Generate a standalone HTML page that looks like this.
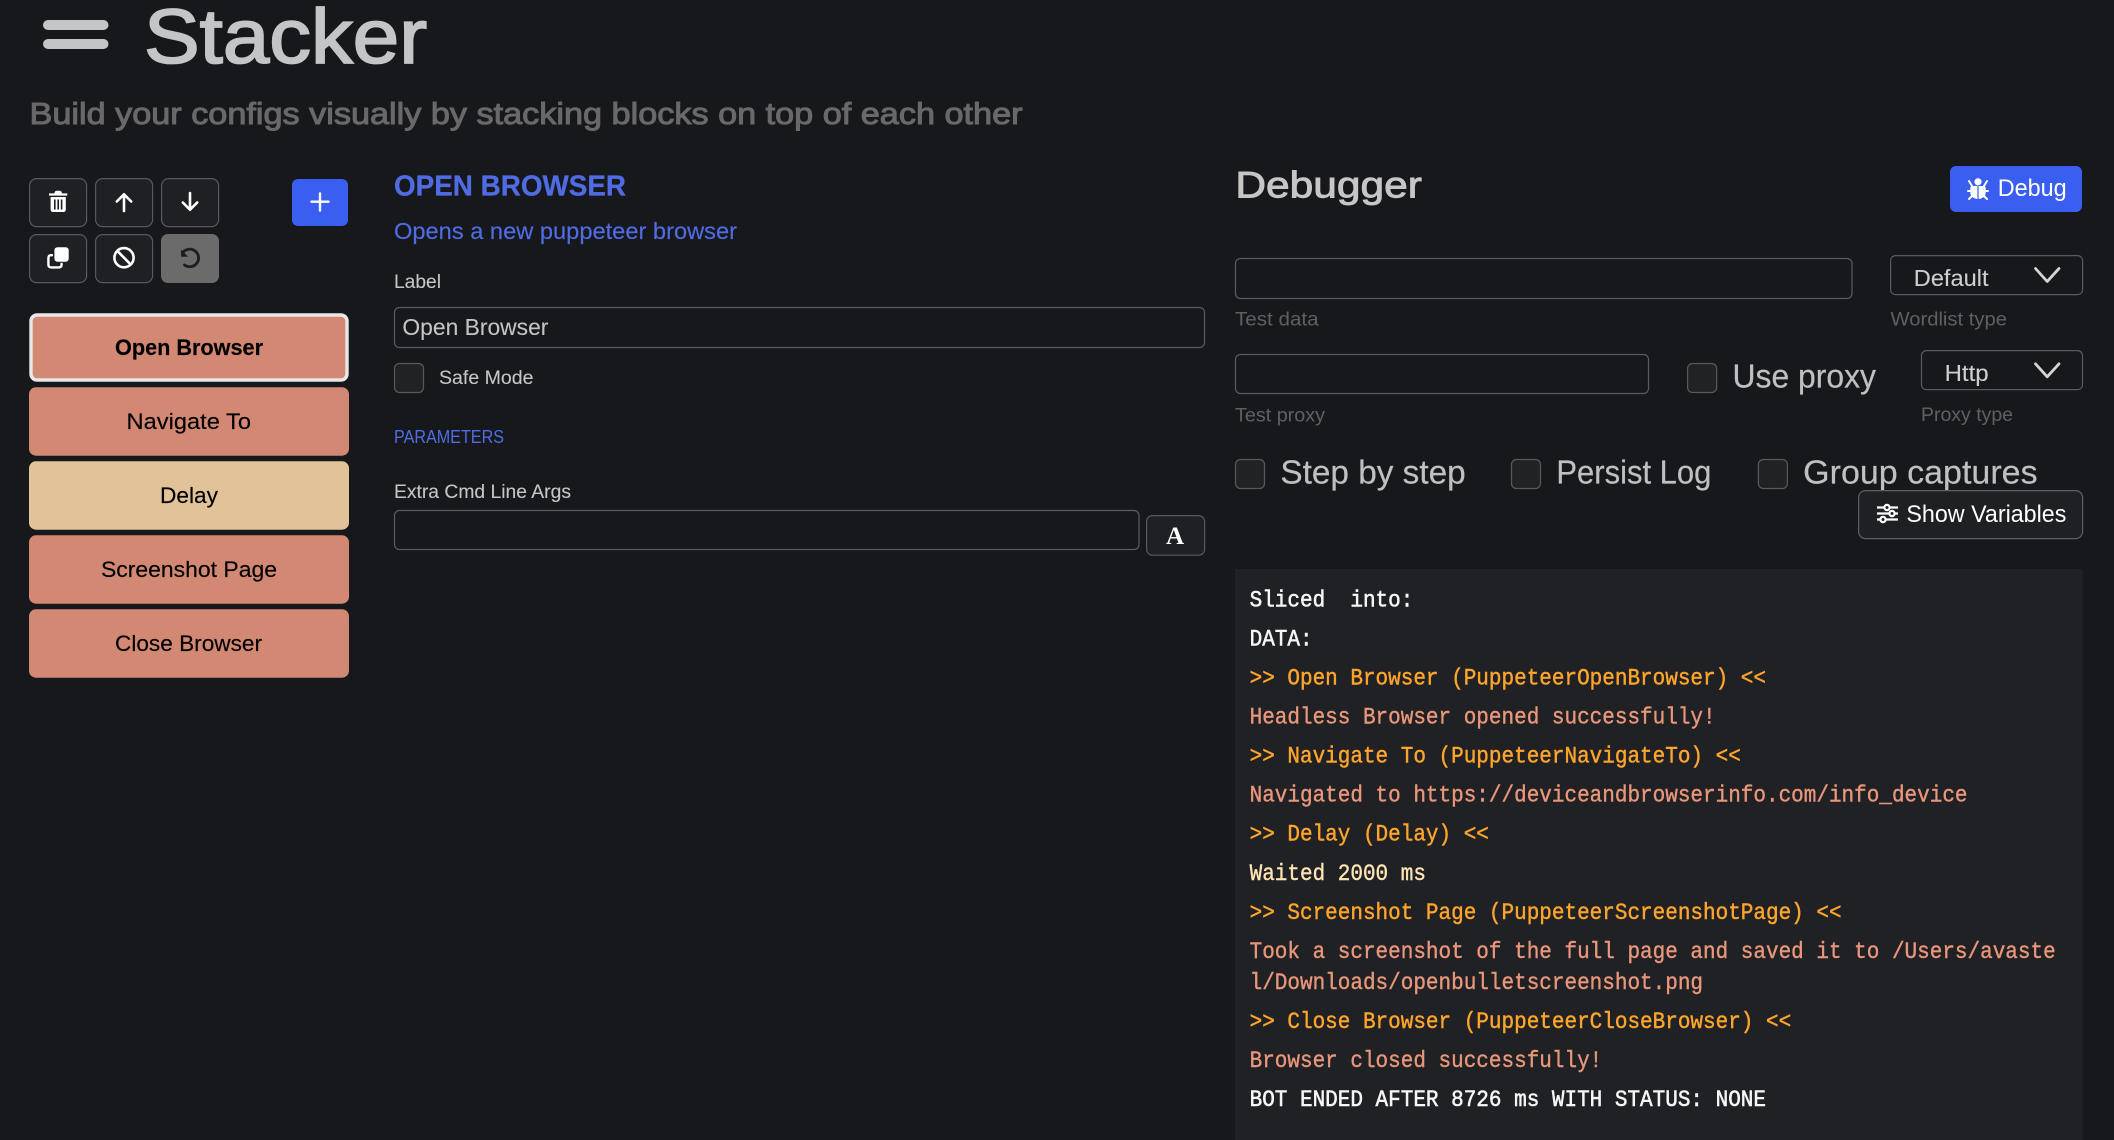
<!DOCTYPE html>
<html lang="en"><head><meta charset="utf-8"><title>Stacker</title>
<style>
html,body{margin:0;padding:0;background:#17181b;width:2114px;height:1140px;overflow:hidden}
svg{display:block}
text{font-family:"Liberation Sans",sans-serif;white-space:pre}
.m{font-family:"Liberation Mono",monospace;font-size:21px;white-space:pre}
.w{fill:#f6f6f6;stroke:#f6f6f6;stroke-width:.5}
.o{fill:#ffa52b;stroke:#ffa52b;stroke-width:.4}
.r{fill:#e9967a;stroke:#e9967a;stroke-width:.35}
.y{fill:#ffe4b5;stroke:#ffe4b5;stroke-width:.35}
.b{fill:#000;stroke:#000;stroke-width:.15}
.g{fill:#5f6062}
.l{fill:#c6c6c7;stroke:#c6c6c7;stroke-width:.1}
.big{fill:#bfc0c2;stroke:#bfc0c2;stroke-width:.2;font-size:33px}
</style></head><body>
<svg xmlns="http://www.w3.org/2000/svg" width="2114" height="1140" viewBox="0 0 2114 1140">
<rect width="2114" height="1140" fill="#17181b"/>
<!-- Header -->
<rect x="43" y="20" width="65.5" height="10" rx="5" fill="#c4c5c7"/>
<rect x="43" y="39" width="65.5" height="10" rx="5" fill="#c4c5c7"/>
<text x="144" y="63" font-size="77" fill="#c4c5c7" stroke="#c4c5c7" stroke-width="1.8" textLength="283" lengthAdjust="spacingAndGlyphs">Stacker</text>
<text x="29.5" y="124" font-size="31" fill="#69696a" stroke="#69696a" stroke-width="1" textLength="993" lengthAdjust="spacingAndGlyphs">Build your configs visually by stacking blocks on top of each other</text>
<!-- Toolbar -->
<g fill="#1f2023" stroke="#58595b" stroke-width="1.2">
<rect x="29.6" y="178.6" width="57" height="48" rx="7"/>
<rect x="95.6" y="178.6" width="57" height="48" rx="7"/>
<rect x="161.6" y="178.6" width="57" height="48" rx="7"/>
<rect x="29.6" y="234.6" width="57" height="48" rx="7"/>
<rect x="95.6" y="234.6" width="57" height="48" rx="7"/>
</g>
<rect x="161" y="234" width="58" height="49" rx="7" fill="#6b6b6b"/>
<rect x="292" y="179" width="56" height="47" rx="6" fill="#3a5ef0"/>
<!-- trash -->
<path d="M49 193.4h18.3v2.2H49z M54.5 193.4c0-1.8 1-2.7 2.2-2.7h3c1.2 0 2.2.9 2.2 2.7z" fill="#fff"/>
<path fill-rule="evenodd" d="M50.6 197h15.2v12.5c0 1.5-1 2.5-2.5 2.5H53.1c-1.5 0-2.5-1-2.5-2.5z M54 199.5v10h1.6v-10z M57.4 199.5v10h1.6v-10z M60.8 199.5v10h1.6v-10z" fill="#fff"/>
<!-- arrows -->
<path d="M124 211V194.5M116.8 201.5L124 194.3l7.2 7.2" fill="none" stroke="#fff" stroke-width="2.6" stroke-linecap="round" stroke-linejoin="round"/>
<path d="M190 193V209.5M182.8 202.5L190 209.7l7.2-7.2" fill="none" stroke="#fff" stroke-width="2.6" stroke-linecap="round" stroke-linejoin="round"/>
<!-- copy -->
<rect x="54.4" y="247.3" width="14.3" height="14.4" rx="3" fill="#fff"/>
<path d="M52 255.2h-1c-1.6 0-2.6 1-2.6 2.6v7c0 1.6 1 2.6 2.6 2.6h8c1.6 0 2.6-1 2.6-2.6v-1" fill="none" stroke="#fff" stroke-width="2.4" stroke-linecap="round"/>
<!-- ban -->
<circle cx="124" cy="257.7" r="9.6" fill="none" stroke="#fff" stroke-width="2.6"/>
<path d="M117.4 251L130.6 264.4" stroke="#fff" stroke-width="2.6"/>
<!-- undo -->
<path d="M182.8 252.6A8.8 8.8 0 1 1 184.5 265" fill="none" stroke="#1d1e21" stroke-width="2.8" stroke-linecap="round"/>
<path d="M181 249.5v7.2h7.2z" fill="#1d1e21"/>
<!-- plus -->
<path d="M320 193.5v17M311.5 201.7h17" stroke="#fff" stroke-width="2.4" stroke-linecap="round"/>
<!-- Blocks -->
<rect x="31" y="315" width="316" height="65" rx="6" fill="#d38873" stroke="#e8e8e8" stroke-width="3.4"/>
<rect x="29" y="387.3" width="320" height="68.4" rx="7" fill="#d38873"/>
<rect x="29" y="461.3" width="320" height="68.4" rx="7" fill="#e2c299"/>
<rect x="29" y="535.3" width="320" height="68.4" rx="7" fill="#d38873"/>
<rect x="29" y="609.3" width="320" height="68.4" rx="7" fill="#d38873"/>
<text class="b" x="115" y="355" font-size="22" font-weight="bold" textLength="148" lengthAdjust="spacingAndGlyphs">Open Browser</text>
<text class="b" x="126.5" y="429" font-size="22" textLength="124.5" lengthAdjust="spacingAndGlyphs">Navigate To</text>
<text class="b" x="160" y="503" font-size="22" textLength="58" lengthAdjust="spacingAndGlyphs">Delay</text>
<text class="b" x="101" y="577" font-size="22" textLength="176" lengthAdjust="spacingAndGlyphs">Screenshot Page</text>
<text class="b" x="115" y="651" font-size="22" textLength="147" lengthAdjust="spacingAndGlyphs">Close Browser</text>
<!-- Center -->
<text x="394" y="195.3" font-size="29" font-weight="bold" fill="#4f6ce4" stroke="#4f6ce4" stroke-width=".3" textLength="232" lengthAdjust="spacingAndGlyphs">OPEN BROWSER</text>
<text x="394" y="239" font-size="23" fill="#4f6ce4" stroke="#4f6ce4" stroke-width=".15" textLength="343" lengthAdjust="spacingAndGlyphs">Opens a new puppeteer browser</text>
<text class="l" x="394" y="288" font-size="19" textLength="47" lengthAdjust="spacingAndGlyphs">Label</text>
<rect x="394.5" y="307.5" width="810" height="40" rx="5" fill="#17181b" stroke="#5a5b5d" stroke-width="1.2"/>
<text x="402.4" y="335" font-size="23" fill="#c4c4c4" stroke="#c4c4c4" stroke-width=".1" textLength="146" lengthAdjust="spacingAndGlyphs">Open Browser</text>
<rect x="394.5" y="363.5" width="29" height="29" rx="5" fill="#212224" stroke="#58595b" stroke-width="1.2"/>
<text class="l" x="439" y="384" font-size="19" textLength="94.5" lengthAdjust="spacingAndGlyphs">Safe Mode</text>
<text x="394" y="443" font-size="18.5" fill="#4f6ce4" textLength="110" lengthAdjust="spacingAndGlyphs">PARAMETERS</text>
<text class="l" x="394" y="498" font-size="19" textLength="177" lengthAdjust="spacingAndGlyphs">Extra Cmd Line Args</text>
<rect x="394.5" y="510.5" width="744.5" height="39" rx="5" fill="#17181b" stroke="#5a5b5d" stroke-width="1.2"/>
<rect x="1146.6" y="515.6" width="58" height="39.6" rx="6" fill="#1f2023" stroke="#58595b" stroke-width="1.2"/>
<text x="1175" y="544" font-size="25" font-weight="bold" fill="#fff" text-anchor="middle" style="font-family:'Liberation Serif',serif">A</text>
<!-- Right -->
<text x="1235.4" y="197.7" font-size="37" fill="#c6c6c7" stroke="#c6c6c7" stroke-width=".9" textLength="186.5" lengthAdjust="spacingAndGlyphs">Debugger</text>
<rect x="1950" y="166" width="132" height="46" rx="6" fill="#3a5ef0"/>
<!-- bug -->
<g fill="#fff">
<circle cx="1978" cy="181.8" r="3.6"/>
<path d="M1972.5 186h11c1.3 0 2.2 1 2.2 2.2v4.3c0 3.7-3.3 6.5-7.7 6.5s-7.7-2.8-7.7-6.5v-4.3c0-1.2.9-2.2 2.2-2.2z"/>
</g>
<path d="M1978 186v13" stroke="#3a5ef0" stroke-width="1.2"/>
<path d="M1969 181l3 5M1987 181l-3 5M1968 191h4M1988 191h-4M1969 199l3.5-3.5M1987 199l-3.5-3.5" stroke="#fff" stroke-width="2" stroke-linecap="round" fill="none"/>
<text x="1997.7" y="196" font-size="24" fill="#fff" textLength="69" lengthAdjust="spacingAndGlyphs">Debug</text>
<rect x="1235.5" y="258.5" width="616.5" height="40" rx="5" fill="#17181b" stroke="#5a5b5d" stroke-width="1.2"/>
<rect x="1890.6" y="255.6" width="192" height="39" rx="5" fill="#17181b" stroke="#5a5b5d" stroke-width="1.2"/>
<text x="1913.8" y="286" font-size="23" fill="#cfcfd0" stroke="#cfcfd0" stroke-width=".1" textLength="74.7" lengthAdjust="spacingAndGlyphs">Default</text>
<path d="M2035.5 268.5L2047.2 281.5L2059 268.5" fill="none" stroke="#d4d4d5" stroke-width="2.8" stroke-linecap="round" stroke-linejoin="round"/>
<text class="g" x="1235" y="325.7" font-size="19.5" textLength="83.6" lengthAdjust="spacingAndGlyphs">Test data</text>
<text class="g" x="1890.5" y="325.7" font-size="19.5" textLength="116.5" lengthAdjust="spacingAndGlyphs">Wordlist type</text>
<rect x="1235.5" y="354.5" width="413" height="39" rx="5" fill="#17181b" stroke="#5a5b5d" stroke-width="1.2"/>
<rect x="1687.6" y="363.5" width="29" height="29" rx="5" fill="#212224" stroke="#58595b" stroke-width="1.2"/>
<text class="big" x="1732.5" y="387.7" textLength="143.5" lengthAdjust="spacingAndGlyphs">Use proxy</text>
<rect x="1921.5" y="350.6" width="161" height="39" rx="5" fill="#17181b" stroke="#5a5b5d" stroke-width="1.2"/>
<text x="1944.6" y="381" font-size="23" fill="#cfcfd0" stroke="#cfcfd0" stroke-width=".1" textLength="44" lengthAdjust="spacingAndGlyphs">Http</text>
<path d="M2035.5 363.8L2047.2 376.8L2059 363.8" fill="none" stroke="#d4d4d5" stroke-width="2.8" stroke-linecap="round" stroke-linejoin="round"/>
<text class="g" x="1235" y="421.7" font-size="19.5" textLength="90" lengthAdjust="spacingAndGlyphs">Test proxy</text>
<text class="g" x="1921" y="421" font-size="19.5" textLength="92" lengthAdjust="spacingAndGlyphs">Proxy type</text>
<!-- checks row -->
<g fill="#212224" stroke="#58595b" stroke-width="1.2">
<rect x="1235.5" y="459.5" width="29" height="29" rx="5"/>
<rect x="1511.5" y="459.5" width="29" height="29" rx="5"/>
<rect x="1758.4" y="459.5" width="29" height="29" rx="5"/>
</g>
<text class="big" x="1280.4" y="483.3" textLength="185.3" lengthAdjust="spacingAndGlyphs">Step by step</text>
<text class="big" x="1556.4" y="483.3" textLength="155" lengthAdjust="spacingAndGlyphs">Persist Log</text>
<text class="big" x="1803.2" y="483.3" textLength="234.4" lengthAdjust="spacingAndGlyphs">Group captures</text>
<rect x="1858.6" y="490.6" width="224" height="48" rx="7" fill="#1f2023" stroke="#5e5f61" stroke-width="1.2"/>
<!-- sliders -->
<g stroke="#fff" stroke-width="2.2" fill="none">
<path d="M1877 507.5h7M1890 507.5h8M1877 513.5h12M1895 513.5h3M1877 519.5h3M1886 519.5h12"/>
<circle cx="1887" cy="507.5" r="2.6"/><circle cx="1892" cy="513.5" r="2.6"/><circle cx="1883" cy="519.5" r="2.6"/>
</g>
<text x="1906.4" y="522" font-size="24" fill="#fff" textLength="160" lengthAdjust="spacingAndGlyphs">Show Variables</text>
<!-- Log -->
<rect x="1235" y="569" width="847.6" height="571" fill="#202124"/>
<text class="m w" transform="matrix(1 0 0 1.1 1249.6 606.7)">Sliced  into:</text>
<text class="m w" transform="matrix(1 0 0 1.1 1249.6 645.7)">DATA:</text>
<text class="m o" transform="matrix(1 0 0 1.1 1249.6 684.7)">&gt;&gt; Open Browser (PuppeteerOpenBrowser) &lt;&lt;</text>
<text class="m r" transform="matrix(1 0 0 1.1 1249.6 723.7)">Headless Browser opened successfully!</text>
<text class="m o" transform="matrix(1 0 0 1.1 1249.6 762.7)">&gt;&gt; Navigate To (PuppeteerNavigateTo) &lt;&lt;</text>
<text class="m r" transform="matrix(1 0 0 1.1 1249.6 801.7)">Navigated to https://deviceandbrowserinfo.com/info_device</text>
<text class="m o" transform="matrix(1 0 0 1.1 1249.6 840.7)">&gt;&gt; Delay (Delay) &lt;&lt;</text>
<text class="m y" transform="matrix(1 0 0 1.1 1249.6 880)">Waited 2000 ms</text>
<text class="m o" transform="matrix(1 0 0 1.1 1249.6 919)">&gt;&gt; Screenshot Page (PuppeteerScreenshotPage) &lt;&lt;</text>
<text class="m r" transform="matrix(1 0 0 1.1 1249.6 958)">Took a screenshot of the full page and saved it to /Users/avaste</text>
<text class="m r" transform="matrix(1 0 0 1.1 1249.6 989)">l/Downloads/openbulletscreenshot.png</text>
<text class="m o" transform="matrix(1 0 0 1.1 1249.6 1028)">&gt;&gt; Close Browser (PuppeteerCloseBrowser) &lt;&lt;</text>
<text class="m r" transform="matrix(1 0 0 1.1 1249.6 1067)">Browser closed successfully!</text>
<text class="m w" transform="matrix(1 0 0 1.1 1249.6 1106)">BOT ENDED AFTER 8726 ms WITH STATUS: NONE</text>
</svg>
</body></html>
